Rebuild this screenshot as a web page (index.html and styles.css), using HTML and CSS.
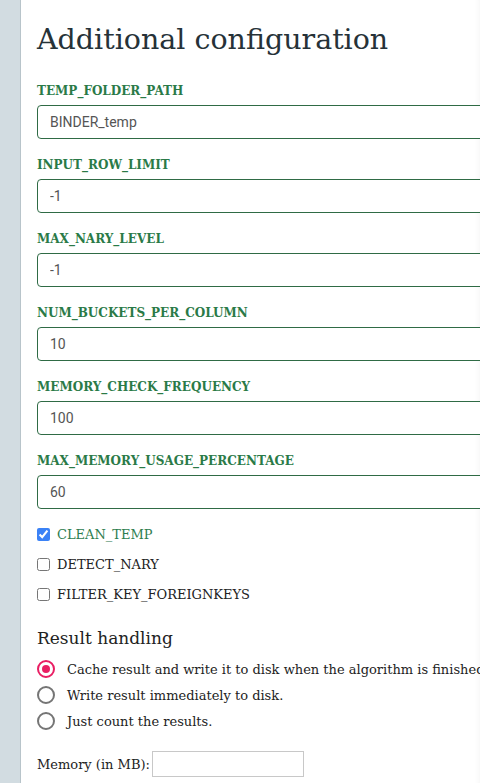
FILE: index.html
```html
<!DOCTYPE html>
<html>
<head>
<meta charset="utf-8">
<link rel="stylesheet" href="styles.css">
</head>
<body>
<div class="layout">
  <div class="sidebar"></div>
  <main class="main">
    <h1 class="title">Additional configuration</h1>
    <div class="field">
      <label class="field-label">TEMP_FOLDER_PATH</label>
      <input class="text-input" type="text" value="BINDER_temp">
    </div>
    <div class="field">
      <label class="field-label">INPUT_ROW_LIMIT</label>
      <input class="text-input" type="text" value="-1">
    </div>
    <div class="field">
      <label class="field-label">MAX_NARY_LEVEL</label>
      <input class="text-input" type="text" value="-1">
    </div>
    <div class="field">
      <label class="field-label">NUM_BUCKETS_PER_COLUMN</label>
      <input class="text-input" type="text" value="10">
    </div>
    <div class="field">
      <label class="field-label">MEMORY_CHECK_FREQUENCY</label>
      <input class="text-input" type="text" value="100">
    </div>
    <div class="field">
      <label class="field-label">MAX_MEMORY_USAGE_PERCENTAGE</label>
      <input class="text-input" type="text" value="60">
    </div>
    <div class="checks">
      <label class="check check-on"><input type="checkbox" checked><span>CLEAN_TEMP</span></label>
      <label class="check"><input type="checkbox"><span>DETECT_NARY</span></label>
      <label class="check"><input type="checkbox"><span>FILTER_KEY_FOREIGNKEYS</span></label>
    </div>
    <h2 class="subtitle">Result handling</h2>
    <div class="radios">
      <label class="radio"><span class="dot dot-on"></span><span>Cache result and write it to disk when the algorithm is finished.</span></label>
      <label class="radio"><span class="dot"></span><span>Write result immediately to disk.</span></label>
      <label class="radio"><span class="dot"></span><span>Just count the results.</span></label>
    </div>
    <div class="memory">
      <span>Memory (in MB):</span>
      <input class="mem-input" type="text">
    </div>
  </main>
</div>
</body>
</html>
```
FILE: styles.css
```css
html, body {
  margin: 0;
  padding: 0;
  overflow: hidden;
  background: #ffffff;
}
.layout {
  display: flex;
  min-height: 783px;
  width: 480px;
  overflow: hidden;
}
.sidebar {
  width: 20px;
  flex: 0 0 20px;
  background: #d2dce1;
  border-right: 1px solid #b8c4ca;
}
.main {
  flex: 1;
  min-width: 0;
  overflow: hidden;
  padding: 0 0 0 16px;
  box-shadow: inset -6px 0 6px -6px rgba(0,0,0,0.06);
  font-family: "DejaVu Serif", serif;
  color: #2a2a2a;
}
.title {
  margin: 22px 0 0 0;
  font-family: "DejaVu Serif", serif;
  font-weight: normal;
  font-size: 28.5px;
  line-height: 36px;
  color: #263238;
  height: 59px;
  white-space: nowrap;
}
.field {
  display: flex;
  flex-direction: column;
  height: 74px;
}
.field-label {
  font-family: "DejaVu Serif", serif;
  font-weight: bold;
  font-size: 12px;
  line-height: 20px;
  color: #2a7a47;
  height: 24px;
}
.text-input {
  box-sizing: border-box;
  width: 460px;
  height: 34px;
  margin: 0;
  border: 1px solid #2f6b45;
  border-radius: 4px;
  padding: 0 12px;
  font-family: Roboto, sans-serif;
  font-size: 14px;
  color: #555;
  background: #fff;
  outline: none;
}
.checks {
  display: flex;
  flex-direction: column;
  margin-top: -6px;
}
.check {
  display: flex;
  align-items: center;
  height: 30px;
  font-size: 13px;
  color: #222;
}
.check input {
  margin: 0 7px 0 0;
  width: 13px;
  height: 13px;
  accent-color: #3b82f6;
}
.check-on {
  color: #2e7d4f;
}
.subtitle {
  margin: 16px 0 0 0;
  font-weight: normal;
  font-size: 17px;
  line-height: 26px;
  color: #222;
}
.radios {
  display: flex;
  flex-direction: column;
  margin-top: 5px;
}
.radio {
  display: flex;
  align-items: center;
  height: 26px;
  font-size: 13px;
  color: #222;
  white-space: nowrap;
}
.dot {
  box-sizing: border-box;
  width: 18px;
  height: 18px;
  flex: 0 0 18px;
  border: 2px solid #757575;
  border-radius: 50%;
  margin-right: 12px;
  position: relative;
}
.dot-on {
  border-color: #e91e63;
}
.dot-on::after {
  content: "";
  position: absolute;
  left: 3px;
  top: 3px;
  width: 8px;
  height: 8px;
  border-radius: 50%;
  background: #e91e63;
}
.memory {
  display: flex;
  align-items: center;
  margin-top: 17px;
  font-size: 13px;
  color: #222;
}
.mem-input {
  box-sizing: border-box;
  width: 152px;
  height: 26px;
  margin-left: 2px;
  border: 1px solid #c8c8c8;
  border-radius: 0;
  padding: 0 4px;
  outline: none;
}
```
